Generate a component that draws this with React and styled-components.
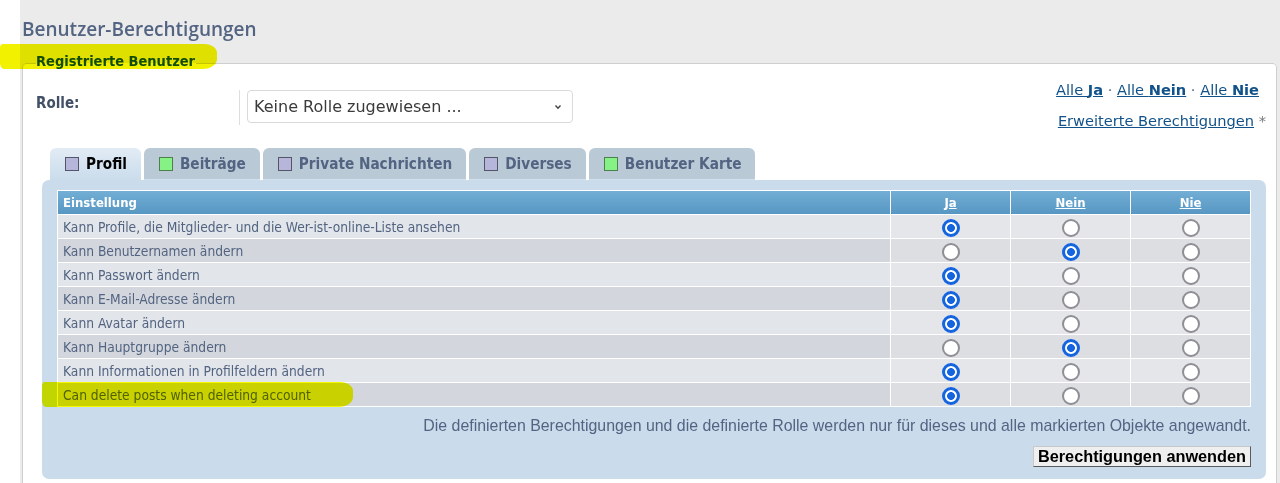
import React from 'react';
import styled, { createGlobalStyle } from 'styled-components';

const COND = '"DejaVu Sans Condensed", "Open Sans", sans-serif';
const VERD = '"DejaVu Sans", Verdana, sans-serif';
const NARROW = '"Liberation Sans Narrow", "Liberation Sans", Arial, sans-serif';

const GlobalStyle = createGlobalStyle`
  html, body { margin: 0; padding: 0; background: #fff; }
  body { font-family: ${VERD}; }
  * { box-sizing: border-box; }
`;

const Viewport = styled.div`
  width: 1280px;
  height: 483px;
  overflow: hidden;
  background: #fff;
`;

const Page = styled.div`
  margin-left: 20px;
  min-height: 483px;
  background: #ebebeb;
  padding: 17px 3px 0 2px;
`;

const Title = styled.h1`
  margin: 0 0 10px;
  font: 600 19px/24px "Open Sans", sans-serif;
  color: #536482;
`;

const Fieldset = styled.fieldset`
  margin: 0;
  padding: 5px 10px 12px 13px;
  border: 1px solid #cfcfcf;
  border-radius: 4px;
  background: #fff;
  min-width: 0;
`;

const Legend = styled.legend`
  position: relative;
  padding: 0 1px 4px 0;
  font: bold 14.5px/20px ${COND};
  color: #115098;
`;

const Marker = styled.span`
  position: absolute;
  top: ${(p) => p.$t}px;
  bottom: ${(p) => p.$b}px;
  left: ${(p) => p.$l}px;
  right: ${(p) => p.$r}px;
  background: ${(p) => p.$c || '#f2f200'};
  mix-blend-mode: multiply;
  border-radius: 3px 12px 14px 4px / 4px 9px 10px 6px;
  pointer-events: none;
`;

const TopRow = styled.div`
  display: flex;
  justify-content: space-between;
  align-items: flex-start;
`;

const RoleField = styled.div`
  display: flex;
  align-items: flex-start;
  padding-top: 10px;
`;

const RoleLabel = styled.label`
  width: 203px;
  padding-top: 3px;
  font: bold 15px/20px ${COND};
  color: #425067;
`;

const Divider = styled.span`
  width: 1px;
  height: 35px;
  background: #dedede;
  margin-right: 7px;
`;

const SelectBox = styled.div`
  width: 326px;
  height: 33px;
  border: 1px solid #dadada;
  border-radius: 4px;
  display: flex;
  align-items: center;
  justify-content: space-between;
  padding: 0 10px 0 6px;
  font: 16px/20px ${VERD};
  color: #3a3a3a;
`;

const Links = styled.div`
  text-align: right;
  font: 14.6px/20px ${VERD};
  color: #536482;
`;

const LinkLine = styled.div`
  padding-right: ${(p) => p.$pr || 0}px;
  & + & {
    margin-top: 11px;
  }
`;

const Link = styled.a`
  color: #105289;
  text-decoration: underline;
  b {
    font-weight: bold;
  }
`;

const Star = styled.span`
  color: #777;
`;

const TabsArea = styled.div`
  margin: 17px 0 0 6px;
`;

const TabBar = styled.div`
  display: flex;
  gap: 3px;
  padding-left: 8px;
`;

const Tab = styled.div`
  height: 32px;
  display: flex;
  align-items: center;
  gap: 7px;
  padding: 0 14px 0 15px;
  border-radius: 6px 6px 0 0;
  font: bold 15.2px/18px ${COND};
  color: ${(p) => (p.$active ? '#000' : '#536482')};
  background: ${(p) => (p.$active ? 'linear-gradient(#e2ecf5, #cadceb)' : '#bac9d6')};
  box-shadow: ${(p) => (p.$active ? 'none' : 'inset 0 -1px 0 #d4e1ec')};
`;

const Swatch = styled.span`
  width: 14px;
  height: 14px;
  border: 1px solid ${(p) => (p.$green ? '#4f7f4f' : '#55556a')};
  background: ${(p) => (p.$green ? '#86f286' : '#b5b6da')};
`;

const TabPanel = styled.div`
  background: #cadceb;
  border-radius: 7px;
  padding: 10px 15px 12px;
`;

const Table = styled.table`
  width: 100%;
  table-layout: fixed;
  border-collapse: separate;
  border-spacing: 1px;
  background: #fff;
`;

const Th = styled.th`
  height: 23px;
  padding: 0 5px;
  text-align: ${(p) => (p.$center ? 'center' : 'left')};
  background: linear-gradient(#72aed5, #5797c3);
  color: #fff;
  font: bold 13px/16px ${COND};
  a {
    color: #fff;
    text-decoration: underline;
  }
`;

const Td = styled.td`
  position: relative;
  height: 23px;
  padding: 0 5px;
  text-align: ${(p) => (p.$center ? 'center' : 'left')};
  vertical-align: middle;
  font: 13.7px/16px ${COND};
  color: #536482;
  background: ${(p) =>
    p.$alt ? (p.$first ? '#d3d7dd' : '#dcdee1') : p.$first ? '#e2e5e9' : '#e4e6e9'};
`;

const CellText = styled.span`
  position: relative;
  display: inline-block;
`;

const Radio = styled.input`
  appearance: none;
  -webkit-appearance: none;
  margin: 2px 0 0;
  width: 18px;
  height: 18px;
  border-radius: 50%;
  border: 2px solid #8e8e94;
  background: #fff;
  vertical-align: top;
  &:checked {
    border: 3px solid #1565e0;
    background: radial-gradient(circle, #1565e0 0 3.6px, #fff 4.2px);
  }
`;

const Note = styled.p`
  margin: 10px 0 0;
  text-align: right;
  font: 15.9px/18px ${NARROW};
  color: #536482;
`;

const ApplyRow = styled.div`
  display: flex;
  justify-content: flex-end;
  margin-top: 11px;
`;

const ApplyButton = styled.button`
  height: 21px;
  padding: 0 4px;
  font: bold 16.3px/17px ${NARROW};
  color: #000;
  background: #efefef;
  border: 1px solid #5a5a5a;
  border-top-color: #c8c8c8;
  border-left-color: #c8c8c8;
`;

const Chevron = () => (
  <svg width="8" height="6" viewBox="0 0 8 6" aria-hidden="true">
    <path d="M1.5 1.5 L4 4.2 L6.5 1.5" fill="none" stroke="#444" strokeWidth="1.4" />
  </svg>
);

const rows = [
  ['Kann Profile, die Mitglieder- und die Wer-ist-online-Liste ansehen', 0],
  ['Kann Benutzernamen ändern', 1],
  ['Kann Passwort ändern', 0],
  ['Kann E-Mail-Adresse ändern', 0],
  ['Kann Avatar ändern', 0],
  ['Kann Hauptgruppe ändern', 1],
  ['Kann Informationen in Profilfeldern ändern', 0],
  ['Can delete posts when deleting account', 0, true],
];

const tabs = [
  { label: 'Profil', active: true },
  { label: 'Beiträge', green: true },
  { label: 'Private Nachrichten' },
  { label: 'Diverses' },
  { label: 'Benutzer Karte', green: true },
];

export default function App() {
  return (
    <Viewport>
      <GlobalStyle />
      <Page>
        <Title>Benutzer-Berechtigungen</Title>
        <Fieldset>
          <Legend>
            Registrierte Benutzer
            <Marker $t={-7} $b={6} $l={-36} $r={-21} />
          </Legend>
          <TopRow>
            <RoleField>
              <RoleLabel>Rolle:</RoleLabel>
              <Divider />
              <SelectBox>
                <span>Keine Rolle zugewiesen ...</span>
                <Chevron />
              </SelectBox>
            </RoleField>
            <Links>
              <LinkLine $pr={7}>
                <Link href="#">Alle <b>Ja</b></Link> &middot;{' '}
                <Link href="#">Alle <b>Nein</b></Link> &middot;{' '}
                <Link href="#">Alle <b>Nie</b></Link>
              </LinkLine>
              <LinkLine>
                <Link href="#">Erweiterte Berechtigungen</Link> <Star>*</Star>
              </LinkLine>
            </Links>
          </TopRow>
          <TabsArea>
            <TabBar>
              {tabs.map((t) => (
                <Tab key={t.label} $active={t.active}>
                  <Swatch $green={t.green} />
                  {t.label}
                </Tab>
              ))}
            </TabBar>
            <TabPanel>
              <Table>
                <colgroup>
                  <col />
                  <col style={{ width: 119 }} />
                  <col style={{ width: 119 }} />
                  <col style={{ width: 119 }} />
                </colgroup>
                <thead>
                  <tr>
                    <Th>Einstellung</Th>
                    <Th $center><a href="#">Ja</a></Th>
                    <Th $center><a href="#">Nein</a></Th>
                    <Th $center><a href="#">Nie</a></Th>
                  </tr>
                </thead>
                <tbody>
                  {rows.map(([label, sel, marked], i) => (
                    <tr key={label}>
                      <Td $first $alt={i % 2 === 1}>
                        <CellText>
                          {label}
                          {marked && <Marker $t={-5} $b={-4} $l={-21} $r={-42} $c="#f4f800" />}
                        </CellText>
                      </Td>
                      {[0, 1, 2].map((c) => (
                        <Td key={c} $center $alt={i % 2 === 1}>
                          <Radio type="radio" name={`r${i}`} defaultChecked={sel === c} />
                        </Td>
                      ))}
                    </tr>
                  ))}
                </tbody>
              </Table>
              <Note>
                Die definierten Berechtigungen und die definierte Rolle werden nur für dieses und alle markierten Objekte angewandt.
              </Note>
              <ApplyRow>
                <ApplyButton type="button">Berechtigungen anwenden</ApplyButton>
              </ApplyRow>
            </TabPanel>
          </TabsArea>
        </Fieldset>
      </Page>
    </Viewport>
  );
}
